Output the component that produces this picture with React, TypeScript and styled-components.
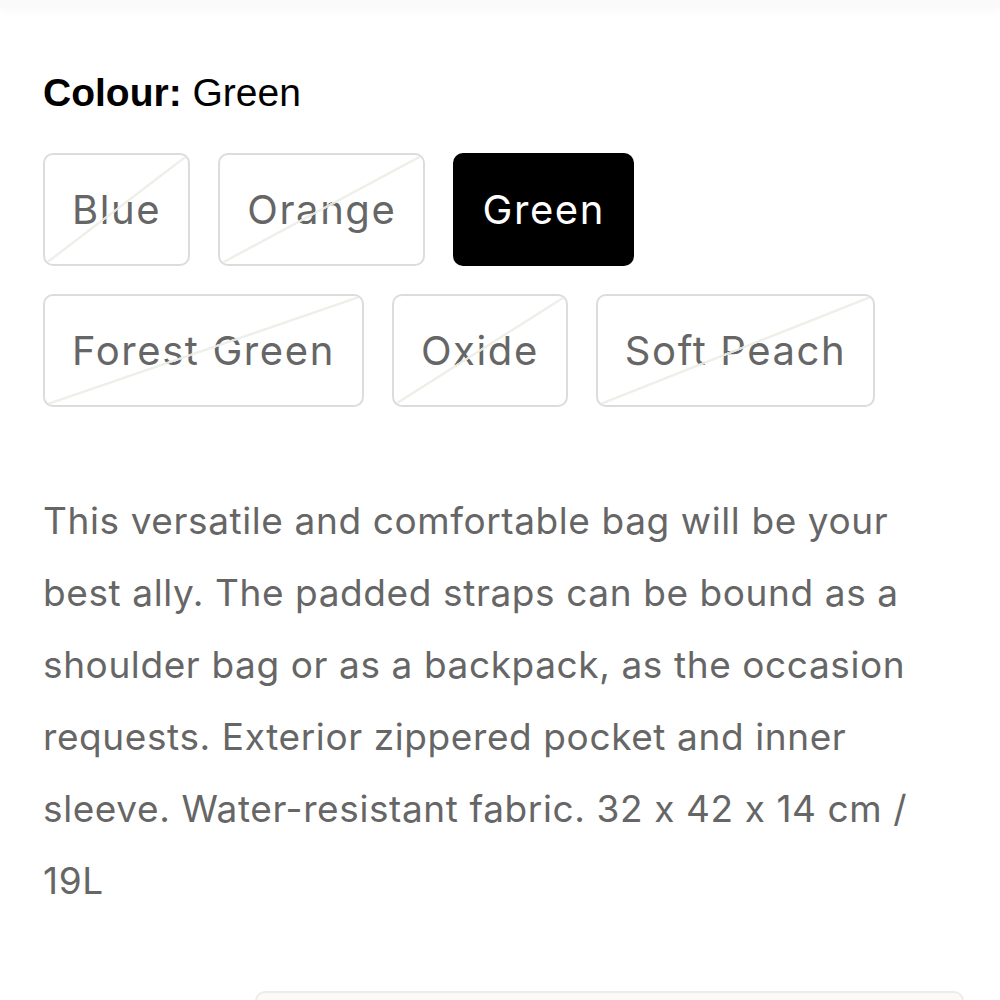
import styled, { createGlobalStyle } from 'styled-components';

const GlobalStyle = createGlobalStyle`
  html, body {
    margin: 0;
    padding: 0;
    background: #ffffff;
  }
  body {
    font-family: Inter, "Noto Sans", sans-serif;
    font-feature-settings: 'calt' 0;
  }
`;

const Page = styled.div`
  width: 1000px;
  height: 1000px;
  overflow: hidden;
  position: relative;
  background: #ffffff;
`;

const TopShade = styled.div`
  height: 8px;
  background: #fafafa;
  box-shadow: 0 3px 8px rgba(0, 0, 0, 0.03);
`;

const Content = styled.div`
  padding: 62px 43px 0 43px;
  display: flex;
  flex-direction: column;
`;

const Label = styled.div`
  font-family: "Liberation Sans", Arial, sans-serif;
  font-size: 39px;
  color: #000;
  line-height: 46px;
  strong {
    font-weight: 700;
  }
`;

const Swatches = styled.div`
  margin-top: 37px;
  display: flex;
  flex-wrap: wrap;
  gap: 28px;
  width: 914px;
`;

const Swatch = styled.button<{ $active?: boolean; $soldOut?: boolean }>`
  position: relative;
  height: 113px;
  padding: 0 27px;
  box-sizing: border-box;
  border-radius: 10px;
  font-family: Inter, "Noto Sans", sans-serif;
  font-feature-settings: 'calt' 0;
  font-size: 40px;
  letter-spacing: 1.6px;
  overflow: hidden;
  cursor: pointer;
  border: 2px solid ${({ $active }) => ($active ? '#000' : '#dcdcdc')};
  background: ${({ $active }) => ($active ? '#000' : '#fff')};
  color: ${({ $active }) => ($active ? '#fff' : '#666666')};
  ${({ $soldOut }) =>
    $soldOut
      ? `
    &::after {
      content: '';
      position: absolute;
      inset: 0;
      background: linear-gradient(
        to bottom right,
        transparent calc(50% - 1.5px),
        rgba(238, 238, 232, 0.9) calc(50% - 1px),
        rgba(238, 238, 232, 0.9) calc(50% + 1px),
        transparent calc(50% + 1.5px)
      );
      pointer-events: none;
    }
  `
      : ''}
`;

const Description = styled.p`
  margin: 78px 0 0 0;
  width: 914px;
  font-size: 37px;
  letter-spacing: 0.6px;
  line-height: 72px;
  color: #666666;
`;

const BottomCard = styled.div`
  position: absolute;
  left: 255px;
  width: 705px;
  top: 991px;
  height: 40px;
  border: 2px solid #ededE7;
  border-radius: 10px;
  background: #fafaf8;
`;

const colours = [
  { name: 'Blue', soldOut: true },
  { name: 'Orange', soldOut: true },
  { name: 'Green', active: true },
  { name: 'Forest Green', soldOut: true },
  { name: 'Oxide', soldOut: true },
  { name: 'Soft Peach', soldOut: true },
];

export default function App() {
  return (
    <Page>
      <GlobalStyle />
      <TopShade />
      <Content>
        <Label>
          <strong>Colour:</strong> Green
        </Label>
        <Swatches>
          {colours.map((c) => (
            <Swatch key={c.name} $active={c.active} $soldOut={c.soldOut}>
              {c.name}
            </Swatch>
          ))}
        </Swatches>
        <Description>
          This versatile and comfortable bag will be your best ally. The padded
          straps can be bound as a shoulder bag or as a backpack, as the occasion
          requests. Exterior zippered pocket and inner sleeve. Water-resistant
          fabric. 32 x 42 x 14 cm / 19L
        </Description>
      </Content>
      <BottomCard />
    </Page>
  );
}
